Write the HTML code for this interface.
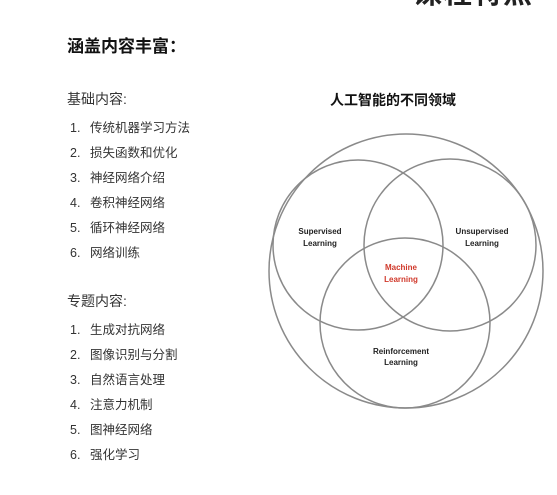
<!DOCTYPE html>
<html><head><meta charset="utf-8"><style>
html,body{margin:0;padding:0;background:#fff;}
body{width:557px;height:495px;position:relative;overflow:hidden;font-family:"Liberation Sans","Noto Sans CJK SC",sans-serif;color:#222;}
.a{position:absolute;white-space:nowrap;}
.h{font-size:17px;font-weight:bold;color:#111;}
.s{font-size:14px;color:#333;}
.i{font-size:12.5px;color:#333;}
.i span{display:inline-block;width:20px;}
</style></head><body>
<div class="a" style="left:413px;top:-30px;font-size:29px;font-weight:bold;color:#222;letter-spacing:1px;">课程特点</div>
<div class="a h" style="left:67px;top:32px;">涵盖内容丰富：</div>
<div class="a s" style="left:67px;top:89px;">基础内容:</div>
<div class="a i" style="left:70px;top:117px;"><span>1.</span>传统机器学习方法</div>
<div class="a i" style="left:70px;top:142px;"><span>2.</span>损失函数和优化</div>
<div class="a i" style="left:70px;top:167px;"><span>3.</span>神经网络介绍</div>
<div class="a i" style="left:70px;top:192px;"><span>4.</span>卷积神经网络</div>
<div class="a i" style="left:70px;top:217px;"><span>5.</span>循环神经网络</div>
<div class="a i" style="left:70px;top:242px;"><span>6.</span>网络训练</div>
<div class="a s" style="left:67px;top:291px;">专题内容:</div>
<div class="a i" style="left:70px;top:319px;"><span>1.</span>生成对抗网络</div>
<div class="a i" style="left:70px;top:344px;"><span>2.</span>图像识别与分割</div>
<div class="a i" style="left:70px;top:369px;"><span>3.</span>自然语言处理</div>
<div class="a i" style="left:70px;top:394px;"><span>4.</span>注意力机制</div>
<div class="a i" style="left:70px;top:419px;"><span>5.</span>图神经网络</div>
<div class="a i" style="left:70px;top:444px;"><span>6.</span>强化学习</div>
<div class="a" style="left:330px;top:90px;font-size:14px;font-weight:bold;color:#111;">人工智能的不同领域</div>
<svg class="a" style="left:0;top:0" width="557" height="495">
<g fill="none" stroke="#8a8a8a" stroke-width="1.5">
<circle cx="406" cy="271" r="137"/>
<circle cx="358" cy="245" r="85"/>
<circle cx="450" cy="245" r="86"/>
<circle cx="405" cy="323" r="85"/>
</g>
<g font-family="Liberation Sans,sans-serif" font-size="8" font-weight="bold" text-anchor="middle" fill="#222">
<text x="320" y="234">Supervised</text><text x="320" y="246">Learning</text>
<text x="482" y="234">Unsupervised</text><text x="482" y="246">Learning</text>
<text x="401" y="270" fill="#d0382a">Machine</text><text x="401" y="282" fill="#d0382a">Learning</text>
<text x="401" y="354">Reinforcement</text><text x="401" y="365">Learning</text>
</g>
</svg>
</body></html>
